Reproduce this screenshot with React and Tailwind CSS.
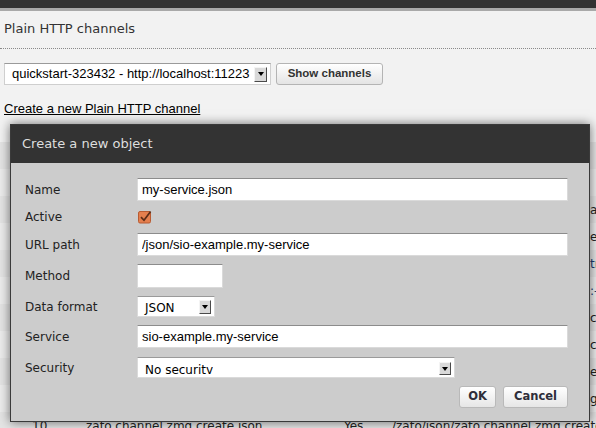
import React from "react"

const rows = [
  { id: "1", name: "zato.ping", active: "Yes", url: "/zato/ping", extra: "" },
  { id: "2", name: "zato.service.invoke", active: "Yes", url: "/zato/json/invoke", extra: "" },
  { id: "3", name: "zato.channel.amqp.create.json", active: "Yes", url: "/zato/json/zato.channel.amqp.create", extra: "active" },
  { id: "4", name: "zato.channel.amqp.edit.json", active: "Yes", url: "/zato/json/zato.channel.amqp.edit", extra: "edit" },
  { id: "5", name: "zato.channel.jms-wmq.get-list", active: "Yes", url: "/zato/json/zato.channel.jms-wmq.get", extra: "true", blue: true },
  { id: "6", name: "zato.channel.jms-wmq.create", active: "Yes", url: "/zato/json/zato.channel.jms-wmq.create", extra: ":-)", blue: true },
  { id: "7", name: "zato.channel.jms-wmq.edit.json", active: "Yes", url: "/zato/json/zato.channel.jms-wmq.edit", extra: "create" },
  { id: "8", name: "zato.channel.zmq.get-list.json", active: "Yes", url: "/zato/json/zato.channel.zmq.get-list", extra: "config" },
  { id: "9", name: "zato.channel.zmq.delete.json", active: "Yes", url: "/zato/json/zato.channel.zmq.delete", extra: "enabled" },
  { id: "10", name: "zato.channel.zmq.edit.json", active: "Yes", url: "/zato/json/zato.channel.zmq.edit", extra: "get" },
]

function Arrow({ className }) {
  return (
    <span className={`flex items-center justify-center bg-[#d9d9d9] border border-t-[#f4f4f4] border-l-[#f4f4f4] border-r-[#4a4a4a] border-b-[#4a4a4a] ${className}`}>
      <span className="w-0 h-0 border-l-[3px] border-r-[3px] border-t-[4px] border-l-transparent border-r-transparent border-t-black" />
    </span>
  )
}

function TextInput({ value, className = "" }) {
  return (
    <input
      readOnly
      value={value}
      className={`h-[23px] bg-white border border-[#dadada] border-t-[#8c8c8c] px-[4px] text-[13px] text-black font-['Liberation_Sans',Arial,sans-serif] outline-none ${className}`}
    />
  )
}

function Label({ children }) {
  return <div className="w-[112px] shrink-0 text-[12px] text-[#222]">{children}</div>
}

export default function App() {
  return (
    <div className="relative w-[596px] h-[428px] overflow-hidden bg-[#f2f2f2] font-['DejaVu_Sans',sans-serif]">

      {/* top bar */}
      <div className="h-[8px] bg-[#333]" />
      <div className="h-[3px] bg-[#a9a9a9]" />

      {/* page title */}
      <div className="mt-[10px] pb-[11px] border-b border-dotted border-[#8a8a8a]">
        <h1 className="px-[4px] text-[13px] leading-[16px] text-[#333]">Plain HTTP channels</h1>
      </div>

      {/* cluster picker */}
      <div className="flex items-center gap-[5px] mt-[14px] px-[4px]">
        <div className="w-[267px] h-[22px] flex items-center justify-between bg-white border border-[#cfcfcf] border-t-[#9a9a9a] pl-[7px] pr-[3px] text-[13px] text-black font-['Liberation_Sans',Arial,sans-serif]">
          <span className="whitespace-nowrap">quickstart-323432 - http://localhost:11223</span>
          <Arrow className="w-[13px] h-[15px]" />
        </div>
        <button className="w-[107px] h-[22px] rounded-[3px] border border-[#b4b4b4] bg-gradient-to-b from-white to-[#e4e4e4] text-[11.5px] font-bold text-[#333] font-['Liberation_Sans',Arial,sans-serif]">
          Show channels
        </button>
      </div>

      <a className="block mt-[16px] px-[4px] w-fit text-[13px] leading-[15px] text-black underline font-['Liberation_Sans',Arial,sans-serif]">
        Create a new Plain HTTP channel
      </a>

      {/* channel list behind the dialog */}
      <div className="mt-[26px]">
        {rows.map((r, i) => (
          <div key={r.id} className={`h-[27px] pl-[32px] grid grid-cols-[54px_258px_48px_198px_auto] items-center text-[12px] text-[#222] whitespace-nowrap ${i % 2 ? "bg-[#ececec]" : "bg-[#e4e4e4]"}`}>
            <span>{r.id}</span>
            <span className="overflow-hidden">{r.name}</span>
            <span>{r.active}</span>
            <span className="overflow-hidden">{r.url}</span>
            <span className={r.blue ? "text-[#1f3d73]" : ""}>{r.extra}</span>
          </div>
        ))}
        <div className="h-[27px] pl-[32px] grid grid-cols-[54px_258px_48px_auto] items-center text-[12px] text-[#222] whitespace-nowrap bg-[#e4e4e4]">
          <span>10</span>
          <span>zato.channel.zmq.create.json</span>
          <span>Yes</span>
          <span>/zato/json/zato.channel.zmq.create.json</span>
        </div>
      </div>

      {/* dialog */}
      <div className="absolute left-[10px] top-[124px] w-[580px] h-[298px] flex flex-col border border-[#3a3a3a] shadow-[0_0_10px_rgba(0,0,0,0.55)]">
        <div className="h-[38px] shrink-0 flex items-center pl-[11px] bg-[#333] text-[13px] text-[#dedede]">
          Create a new object
        </div>
        <div className="flex-1 bg-[#cccccc] pl-[14px] pr-[21px] pt-[15px]">
          <div className="flex items-center h-[23px]">
            <Label>Name</Label>
            <TextInput value="my-service.json" className="flex-1" />
          </div>
          <div className="flex items-center h-[32px]">
            <Label>Active</Label>
            <svg width="14" height="14" viewBox="0 0 14 14" className="ml-[1px]">
              <rect x="0.5" y="1.5" width="12" height="11.5" rx="1.5" fill="#e47f4e" stroke="#b85b32" />
              <path d="M3 7.2 L6 10.3 L12.6 1.6" stroke="#5a2c17" strokeWidth="1.7" fill="none" />
            </svg>
          </div>
          <div className="flex items-center h-[23px]">
            <Label>URL path</Label>
            <TextInput value="/json/sio-example.my-service" className="flex-1" />
          </div>
          <div className="flex items-center h-[24px] mt-[8px]">
            <Label>Method</Label>
            <TextInput value="" className="w-[86px] h-[24px]" />
          </div>
          <div className="flex items-center h-[21px] mt-[8px]">
            <Label>Data format</Label>
            <div className="w-[78px] h-[21px] flex items-center justify-between bg-white border border-[#dadada] border-t-[#9a9a9a] pl-[7px] pr-[3px] text-[12px] text-black">
              <span className="pt-[2px]">JSON</span>
              <Arrow className="w-[12px] h-[14px]" />
            </div>
          </div>
          <div className="flex items-center h-[23px] mt-[8px]">
            <Label>Service</Label>
            <TextInput value="sio-example.my-service" className="flex-1" />
          </div>
          <div className="flex items-center h-[21px] mt-[9px]">
            <Label>Security</Label>
            <div className="w-[318px] h-[21px] flex items-start justify-between bg-white border border-[#dadada] border-t-[#9a9a9a] pl-[7px] pr-[3px] text-[12px] text-black">
              <div className="h-[16px] overflow-hidden pt-[5px] leading-[14px]">No security</div>
              <Arrow className="w-[12px] h-[13px] mt-[4px]" />
            </div>
          </div>
          <div className="flex justify-end gap-[7px] mt-[8px]">
            <button className="w-[37px] h-[22px] rounded-[3px] border border-[#b9b9b9] bg-gradient-to-b from-white to-[#e6e6e6] text-[11.5px] font-bold text-[#2e2e3a]">
              OK
            </button>
            <button className="w-[65px] h-[22px] rounded-[3px] border border-[#b9b9b9] bg-gradient-to-b from-white to-[#e6e6e6] text-[11.5px] font-bold text-[#2e2e3a]">
              Cancel
            </button>
          </div>
        </div>
      </div>

    </div>
  )
}
